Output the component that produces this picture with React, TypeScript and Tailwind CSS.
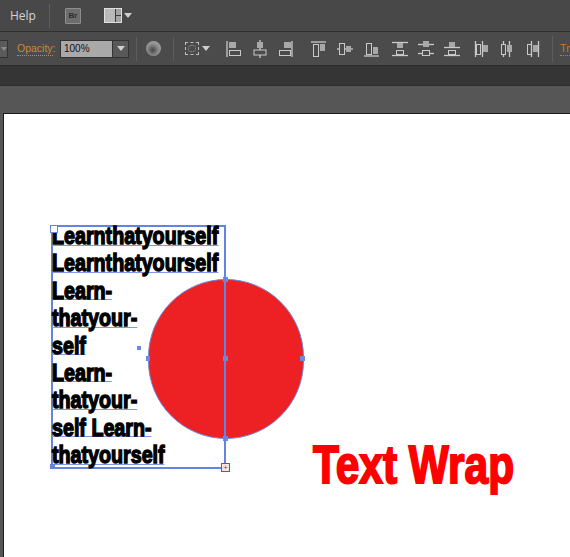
const line = "#c9c9c9";
const fill = "#a8a8a8";

function Glyph({ w = 16, children }: { w?: number; children: React.ReactNode }) {
  return (
    <svg width={w} height="18" viewBox={`0 0 ${w} 18`} className="shrink-0">
      {children}
    </svg>
  );
}

const Box = ({ x, y, w, h }: { x: number; y: number; w: number; h: number }) => (
  <rect x={x + 0.5} y={y + 0.5} width={w} height={h} fill="none" stroke={line} strokeWidth="1" />
);
const Solid = ({ x, y, w, h }: { x: number; y: number; w: number; h: number }) => (
  <rect x={x} y={y} width={w} height={h} fill={fill} />
);
const L = ({ x1, y1, x2, y2 }: { x1: number; y1: number; x2: number; y2: number }) => (
  <line x1={x1} y1={y1} x2={x2} y2={y2} stroke={line} strokeWidth="1.3" />
);

function Caret({ className = "" }: { className?: string }) {
  return <span className={`w-0 h-0 border-l-[4px] border-r-[4px] border-t-[5px] border-l-transparent border-r-transparent border-t-[#cfcfcf] ${className}`} />;
}

function Sep({ className = "" }: { className?: string }) {
  return <span className={`w-px self-center bg-[#5e5e5e] ${className}`} />;
}

function TextLine({ children }: { children: string }) {
  return (
    <div className="h-[27.4px] origin-left scale-x-[0.82] whitespace-nowrap">
      <span className="inline-block h-[21.5px] border-b border-b-[#7d98e6] leading-[24px] text-[24px] font-bold text-black [-webkit-text-stroke:1.4px_black]">
        {children}
      </span>
    </div>
  );
}

export default function App() {
  return (
    <div className="w-[570px] h-[557px] overflow-hidden flex flex-col bg-[#565656] font-['Liberation_Sans',Arial,sans-serif]">
      {/* Menu bar */}
      <div className="h-[32px] shrink-0 flex items-center bg-[#484848] border-b border-b-[#2f2f2f]">
        <span className="ml-[10px] w-[25px] text-[12px] text-[#d4d4d4] font-['Open_Sans',sans-serif]">Help</span>
        <Sep className="ml-[14px] h-[24px]" />
        <span className="ml-[15px] w-[16px] h-[16px] flex items-center justify-center rounded-[1px] border border-[#8e8e8e] bg-[#6d6d6d] text-[8px] font-bold text-[#2c2c2c]">Br</span>
        <span className="ml-[23px] w-[18px] h-[15px] grid grid-cols-[10px_1fr] grid-rows-2 gap-px border border-[#e0e0e0] bg-[#3a3a3a]">
          <span className="row-span-2 bg-[#b9b9b9]" />
          <span className="bg-[#a3a3a3]" />
          <span className="bg-[#a3a3a3]" />
        </span>
        <Caret className="ml-[2px]" />
      </div>

      {/* Control bar */}
      <div className="h-[34px] shrink-0 flex items-center bg-[#4b4b4b] border-b border-b-[#2a2a2a]">
        <span className="w-[8px] h-[18px] flex items-center justify-end border border-l-0 border-[#333] bg-[#5a5a5a]">
          <span className="w-0 h-0 border-l-[3px] border-r-[3px] border-t-[4px] border-l-transparent border-r-transparent border-t-[#8a8a8a]" />
        </span>
        <span className="ml-[9px] w-[36px] whitespace-nowrap text-[10.5px] leading-[13px] text-[#d2853a] border-b border-dotted border-b-[#d2853a]">Opacity:</span>
        <span className="ml-[7px] w-[53px] h-[18px] flex items-center pl-[3px] bg-[#a9a9a9] border border-[#333] text-[10px] text-[#111]">100%</span>
        <span className="w-[16px] h-[18px] flex items-center justify-center bg-[#585858] border border-l-0 border-[#333]">
          <Caret />
        </span>
        <Sep className="ml-[7px] h-[24px]" />
        <span className="ml-[9px] w-[15px] h-[15px] rounded-full bg-[radial-gradient(circle_at_45%_60%,#444_0,#8a8a8a_45%,#b5b5b5_100%)]" />
        <Sep className="ml-[12px] h-[24px]" />
        <span className="ml-[11px] w-[14px] h-[13px] border border-dashed border-[#bdbdbd] flex items-center justify-center">
          <span className="w-[8px] h-[7px] rounded-full border border-dotted border-[#9a9a9a]" />
        </span>
        <Caret className="ml-[3px]" />

        <span className="ml-[16px] flex items-center">
          <Glyph><L x1={1} y1={1} x2={1} y2={17} /><Solid x={3} y={2} w={7} h={6} /><Box x={3} y={10} w={11} h={5} /></Glyph>
          <span className="w-[11px]" />
          <Glyph><L x1={7} y1={0} x2={7} y2={18} /><Solid x={4} y={2} w={6} h={6} /><rect x={1} y={10} width={12} height={5} fill="#4b4b4b" stroke={line} /></Glyph>
          <span className="w-[9px]" />
          <Glyph><L x1={14} y1={1} x2={14} y2={17} /><Solid x={6} y={2} w={7} h={6} /><Box x={1} y={10} w={11} h={5} /></Glyph>
        </span>

        <span className="ml-[17px] flex items-center">
          <Glyph><L x1={0} y1={2} x2={15} y2={2} /><Box x={2} y={4} w={5} h={12} /><Solid x={9} y={4} w={5} h={7} /></Glyph>
          <span className="w-[10px]" />
          <Glyph><L x1={0} y1={9} x2={16} y2={9} /><rect x={2.5} y={3.5} width={5} height={11} fill="#4b4b4b" stroke={line} /><Solid x={9} y={6} w={5} h={6} /></Glyph>
          <span className="w-[11px]" />
          <Glyph><L x1={0} y1={16} x2={15} y2={16} /><Box x={2} y={3} w={5} h={11} /><Solid x={9} y={7} w={5} h={7} /></Glyph>
        </span>

        <span className="ml-[11px] flex items-center">
          <Glyph w={18}><L x1={1} y1={2.5} x2={17} y2={2.5} /><L x1={1} y1={15.5} x2={17} y2={15.5} /><Solid x={6} y={3} w={6} h={5} /><Box x={5} y={10} w={7} h={4} /></Glyph>
          <span className="w-[8px]" />
          <Glyph w={18}><L x1={1} y1={4.5} x2={17} y2={4.5} /><L x1={1} y1={13.5} x2={17} y2={13.5} /><Solid x={6} y={1} w={6} h={6} /><rect x={5.5} y={10.5} width={7} height={5} fill="#4b4b4b" stroke={line} /></Glyph>
          <span className="w-[8px]" />
          <Glyph w={18}><L x1={1} y1={7.5} x2={17} y2={7.5} /><L x1={1} y1={15.5} x2={17} y2={15.5} /><Solid x={6} y={2} w={6} h={5} /><Box x={5} y={10} w={7} h={4} /></Glyph>
        </span>

        <span className="ml-[13px] flex items-center">
          <Glyph w={14}><L x1={1.5} y1={1} x2={1.5} y2={17} /><L x1={8.5} y1={1} x2={8.5} y2={17} /><Box x={2} y={4} w={4} h={10} /><Solid x={9} y={5} w={5} h={7} /></Glyph>
          <span className="w-[12px]" />
          <Glyph w={14}><L x1={3.5} y1={1} x2={3.5} y2={17} /><L x1={9.5} y1={1} x2={9.5} y2={17} /><rect x={1.5} y={4.5} width={4} height={10} fill="#4b4b4b" stroke={line} /><Solid x={7} y={5} w={5} h={7} /></Glyph>
          <span className="w-[12px]" />
          <Glyph w={14}><L x1={5.5} y1={1} x2={5.5} y2={17} /><L x1={12.5} y1={1} x2={12.5} y2={17} /><Box x={1} y={4} w={4} h={10} /><Solid x={7} y={5} w={5} h={7} /></Glyph>
        </span>

        <Sep className="ml-[12px] h-[26px]" />
        <span className="ml-[7px] text-[11px] leading-[13px] text-[#c07a30] border-b border-dotted border-b-[#c07a30]">Tr</span>
      </div>

      {/* Dark tab strip */}
      <div className="h-[20px] shrink-0 bg-[#353535] border-b border-b-[#2e2e2e]" />

      {/* Workspace */}
      <div className="flex-1 min-h-0 flex flex-col pt-[27px] pl-[3px] bg-[#565656]">
        <div className="relative flex-1 bg-white border-t border-l border-[#1c1c1c]">
          {/* Circle */}
          <span className="absolute left-[144px] top-[165px] w-[156px] h-[160px] rounded-full bg-[#ed2024] border border-[#6d84d8]" />
          <span className="absolute left-[142px] top-[242px] w-[4px] h-[5px] bg-[#6a8ae8]" />
          <span className="absolute left-[296px] top-[242px] w-[5px] h-[5px] bg-[#6a8ae8]" />
          <span className="absolute left-[219px] top-[242px] w-[5px] h-[5px] bg-[#6a8ae8]" />
          <span className="absolute left-[219px] top-[163px] w-[5px] h-[5px] bg-[#6a8ae8]" />
          <span className="absolute left-[219px] top-[322px] w-[5px] h-[5px] bg-[#6a8ae8]" />
          <span className="absolute left-[133px] top-[232px] w-[4px] h-[4px] bg-[#6a8ae8]" />

          {/* Text frame */}
          <div className="absolute left-[47px] top-[111px] w-[175px] h-[244px] border-2 border-[#6484e4]">
            <div className="-mt-[3px] -ml-px">
              <TextLine>Learnthatyourself</TextLine>
              <TextLine>Learnthatyourself</TextLine>
              <TextLine>Learn-</TextLine>
              <TextLine>thatyour-</TextLine>
              <TextLine>self</TextLine>
              <TextLine>Learn-</TextLine>
              <TextLine>thatyour-</TextLine>
              <TextLine>self Learn-</TextLine>
              <TextLine>thatyourself</TextLine>
            </div>
          </div>
          <span className="absolute left-[46px] top-[111px] w-[8px] h-[8px] bg-white border border-[#6484e4]" />
          <span className="absolute left-[46px] top-[350px] w-[5px] h-[5px] bg-[#6484e4]" />
          <span className="absolute left-[217px] top-[349px] w-[9px] h-[9px] flex items-center justify-center bg-[#fde4e4] border border-[#ee2244] text-[8px] leading-none text-[#ee2244]">+</span>

          {/* Caption */}
          <span className="absolute left-[309px] top-[316px] origin-left scale-x-[0.8] whitespace-nowrap text-[53px] leading-[70px] font-bold text-[#ff0000] [-webkit-text-stroke:2px_#ff0000]">Text Wrap</span>
        </div>
      </div>
    </div>
  );
}
